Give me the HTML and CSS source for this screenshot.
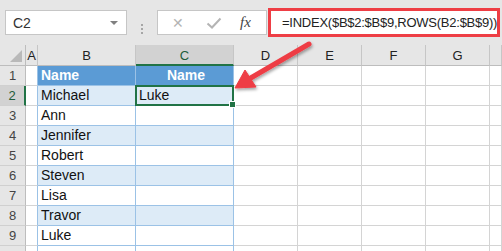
FILE: index.html
```html
<!DOCTYPE html>
<html lang="en">
<head>
  <meta charset="UTF-8">
  <title>INDEX ROWS</title>
  <link rel="stylesheet" href="styles.css">
</head>
<body>
  <div class="window">
    <div class="formula-bar">
      <div class="name-box">
        <span>C2</span>
        <span class="drop"></span>
      </div>
      <div class="grip"><i></i><i></i><i></i></div>
      <div class="fx-buttons">
        <span class="btn-x">&#x2715;</span>
        <svg class="btn-ok" width="16" height="12" viewBox="0 0 16 12"><path d="M1.5 6.5 L6 10.5 L14.5 1.5" fill="none" stroke="#b4b4b4" stroke-width="2"/></svg>
        <span class="btn-fx">fx</span>
      </div>
      <div class="formula">=INDEX($B$2:$B$9,ROWS(B2:$B$9))</div>
    </div>

    <div class="sheet">
      <div class="corner"></div>
      <div class="col-hd">A</div>
      <div class="col-hd">B</div>
      <div class="col-hd active">C</div>
      <div class="col-hd">D</div>
      <div class="col-hd">E</div>
      <div class="col-hd">F</div>
      <div class="col-hd">G</div>
      <div class="col-hd"></div>

      <div class="row-hd">1</div>
      <div class="cell a-edge"></div>
      <div class="cell tbl head">Name</div>
      <div class="cell tbl head center">Name</div>
      <div class="cell"></div><div class="cell"></div><div class="cell"></div><div class="cell"></div><div class="cell"></div>

      <div class="row-hd active">2</div>
      <div class="cell a-edge"></div>
      <div class="cell tbl band">Michael</div>
      <div class="cell tbl band sel">Luke</div>
      <div class="cell"></div><div class="cell"></div><div class="cell"></div><div class="cell"></div><div class="cell"></div>

      <div class="row-hd">3</div>
      <div class="cell a-edge"></div>
      <div class="cell tbl">Ann</div>
      <div class="cell tbl"></div>
      <div class="cell"></div><div class="cell"></div><div class="cell"></div><div class="cell"></div><div class="cell"></div>

      <div class="row-hd">4</div>
      <div class="cell a-edge"></div>
      <div class="cell tbl band">Jennifer</div>
      <div class="cell tbl band"></div>
      <div class="cell"></div><div class="cell"></div><div class="cell"></div><div class="cell"></div><div class="cell"></div>

      <div class="row-hd">5</div>
      <div class="cell a-edge"></div>
      <div class="cell tbl">Robert</div>
      <div class="cell tbl"></div>
      <div class="cell"></div><div class="cell"></div><div class="cell"></div><div class="cell"></div><div class="cell"></div>

      <div class="row-hd">6</div>
      <div class="cell a-edge"></div>
      <div class="cell tbl band">Steven</div>
      <div class="cell tbl band"></div>
      <div class="cell"></div><div class="cell"></div><div class="cell"></div><div class="cell"></div><div class="cell"></div>

      <div class="row-hd">7</div>
      <div class="cell a-edge"></div>
      <div class="cell tbl">Lisa</div>
      <div class="cell tbl"></div>
      <div class="cell"></div><div class="cell"></div><div class="cell"></div><div class="cell"></div><div class="cell"></div>

      <div class="row-hd">8</div>
      <div class="cell a-edge"></div>
      <div class="cell tbl band">Travor</div>
      <div class="cell tbl band"></div>
      <div class="cell"></div><div class="cell"></div><div class="cell"></div><div class="cell"></div><div class="cell"></div>

      <div class="row-hd">9</div>
      <div class="cell a-edge"></div>
      <div class="cell tbl">Luke</div>
      <div class="cell tbl"></div>
      <div class="cell"></div><div class="cell"></div><div class="cell"></div><div class="cell"></div><div class="cell"></div>

      <div class="row-hd"></div>
      <div class="cell a-edge"></div>
      <div class="cell tbl"></div>
      <div class="cell tbl"></div>
      <div class="cell"></div><div class="cell"></div><div class="cell"></div><div class="cell"></div><div class="cell"></div>
    </div>

    <!-- callout arrow pointing at C2 -->
    <svg class="callout" width="502" height="251" viewBox="0 0 502 251">
      <defs>
        <filter id="shadow" x="-20%" y="-20%" width="140%" height="140%">
          <feDropShadow dx="1" dy="2" stdDeviation="1.5" flood-color="#000" flood-opacity="0.35"/>
        </filter>
      </defs>
      <g filter="url(#shadow)" fill="#ee3e45" stroke="#ee3e45">
        <line x1="309" y1="44" x2="249" y2="79" stroke-width="5" stroke-linecap="round"/>
        <polygon points="235,88 245,70 256,87" stroke-width="1" stroke-linejoin="round"/>
      </g>
    </svg>
  </div>
</body>
</html>
```

FILE: styles.css
```css
* {
  box-sizing: border-box;
}
body {
  margin: 0;
  background-color: #e6e6e6;
  font-family: 'Liberation Sans', Arial, sans-serif;
}
.window {
  position: relative;
  width: 502px;
  height: 251px;
  overflow: hidden;
}
.formula-bar {
  display: flex;
  align-items: flex-start;
  height: 45px;
  padding: 8px 2px 0 5px;
}
.name-box {
  display: flex;
  align-items: center;
  justify-content: space-between;
  width: 122px;
  height: 25px;
  margin-top: 2px;
  padding: 0 8px 0 7px;
  background-color: white;
  border: 1px solid #c6c6c6;
  font-size: 14px;
  color: #333;
}
.drop {
  width: 0;
  height: 0;
  border-left: 4px solid transparent;
  border-right: 4px solid transparent;
  border-top: 4px solid #808080;
}
.grip {
  display: flex;
  flex-direction: column;
  gap: 2px;
  width: 30px;
  margin-top: 16px;
  align-items: center;
}
.grip i {
  display: block;
  width: 2px;
  height: 2px;
  background-color: #a6a6a6;
}
.fx-buttons {
  display: flex;
  align-items: center;
  width: 110px;
  height: 25px;
  margin-top: 2px;
  padding-left: 14px;
  background-color: white;
  border: 1px solid #c6c6c6;
}
.btn-x {
  font-size: 14px;
  color: #b4b4b4;
  width: 34px;
}
.btn-ok {
  margin-right: 18px;
}
.btn-fx {
  font-family: 'Liberation Serif', serif;
  font-style: italic;
  font-size: 15px;
  color: #444;
}
.formula {
  width: 232px;
  height: 29px;
  margin-left: 1px;
  padding-left: 11px;
  background-color: white;
  border: 3px solid #ee3e45;
  font-size: 13px;
  letter-spacing: -0.25px;
  line-height: 23px;
  color: #222;
  white-space: nowrap;
}
.sheet {
  display: grid;
  grid-template-columns: 26px 12px 98px 98px 64px 64px 64px 64px 1fr;
  grid-template-rows: 21px repeat(9, 20px) 20px;
  background-color: white;
}
.corner {
  position: relative;
  background-color: #e6e6e6;
  border-right: 1px solid #bdbdbd;
  border-bottom: 1px solid #bdbdbd;
}
.corner::after {
  content: '';
  position: absolute;
  right: 3px;
  bottom: 3px;
  width: 0;
  height: 0;
  border-left: 12px solid transparent;
  border-bottom: 12px solid #b9b9b9;
}
.col-hd {
  background-color: #e6e6e6;
  border-right: 1px solid #c6c6c6;
  border-bottom: 1px solid #bdbdbd;
  text-align: center;
  font-size: 13px;
  line-height: 21px;
  color: #222;
}
.col-hd.active {
  background-color: #d2d2d2;
  border-bottom: 2px solid #217346;
  color: #1e5c3a;
}
.row-hd {
  background-color: #e6e6e6;
  border-right: 1px solid #bdbdbd;
  border-bottom: 1px solid #d0d0d0;
  text-align: center;
  font-size: 13px;
  line-height: 19px;
  color: #444;
}
.row-hd.active {
  background-color: #d2d2d2;
  border-right: 2px solid #217346;
  color: #1e5c3a;
}
.cell {
  border-right: 1px solid #d4d4d4;
  border-bottom: 1px solid #d4d4d4;
  padding-left: 3px;
  font-size: 14px;
  line-height: 19px;
  color: #111;
  white-space: nowrap;
}
.cell.a-edge {
  border-right-color: #9bc2e6;
}
.cell.tbl {
  border-right-color: #9bc2e6;
  border-bottom-color: #9bc2e6;
}
.cell.band {
  background-color: #ddebf7;
}
.cell.head {
  background-color: #5b9bd5;
  color: white;
  font-weight: bold;
}
.cell.center {
  text-align: center;
}
.cell.sel {
  position: relative;
}
.cell.sel::before {
  content: '';
  position: absolute;
  left: -1px;
  top: -1px;
  right: -1px;
  bottom: -1px;
  border: 2px solid #217346;
}
.cell.sel::after {
  content: '';
  position: absolute;
  right: -3px;
  bottom: -3px;
  width: 5px;
  height: 5px;
  background-color: #217346;
  border: 1px solid white;
}
.callout {
  position: absolute;
  left: 0;
  top: 0;
  pointer-events: none;
}
```
